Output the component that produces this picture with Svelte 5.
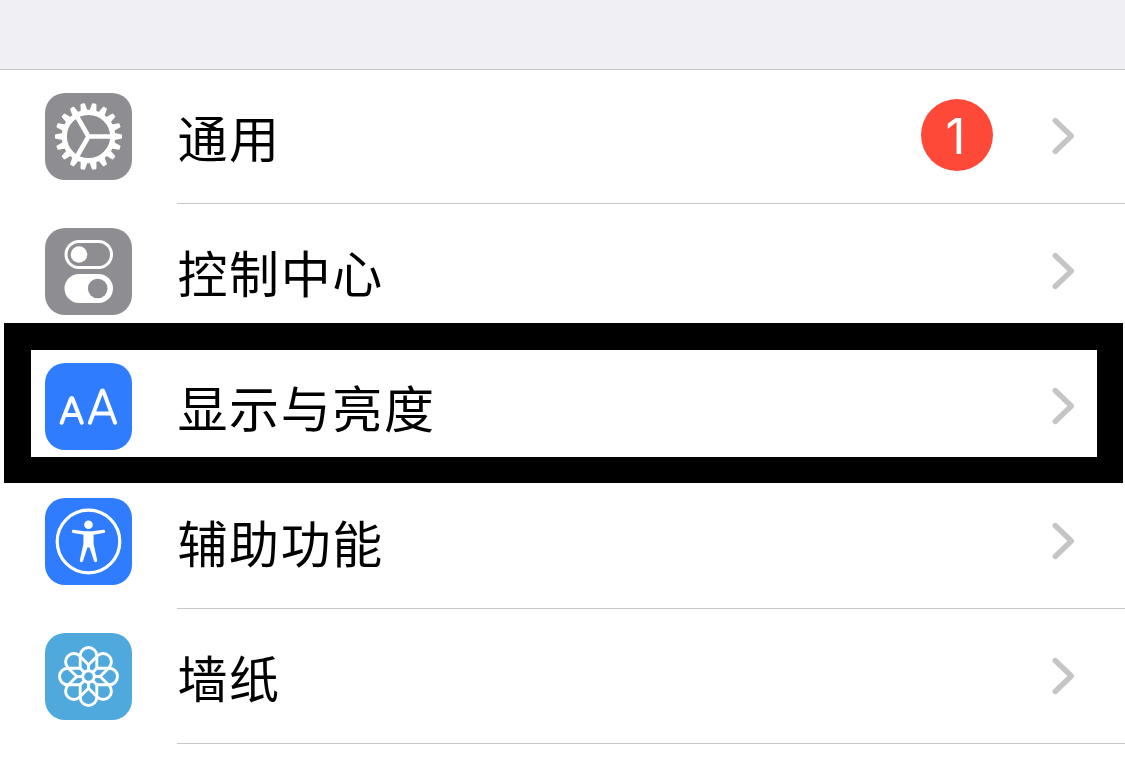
<script lang="ts">
	const rows = [
		{ icon: 'general', label: '通用', color: '#8e8e92', badge: 1 },
		{ icon: 'control', label: '控制中心', color: '#8e8e92' },
		{ icon: 'display', label: '显示与亮度', color: '#2f7cff' },
		{ icon: 'accessibility', label: '辅助功能', color: '#2f7cff' },
		{ icon: 'wallpaper', label: '墙纸', color: '#50a9dd' }
	];

	const teeth = Array.from({ length: 18 }, (_, i) => i * 20);
	const petals = Array.from({ length: 8 }, (_, i) => i * 45);
</script>

<header></header>
<ul>
	{#each rows as row}
		<li class:highlighted={row.icon === 'display'}>
			<svg class="icon" viewBox="0 0 87 87" style:background={row.color}>
				{#if row.icon === 'general'}
					<g fill="none" stroke="#fff">
						<circle cx="43.5" cy="43.5" r="24.2" stroke-width="5.2" />
						<path d="M43.5 43.5H67M43.5 43.5L31.7 23M43.5 43.5L31.7 64" stroke-width="4.6" />
					</g>
					{#each teeth as angle}
						<path
							d="M39.8 19L41.2 10.8Q41.4 10 42.2 10H44.8Q45.6 10 45.8 10.8L47.2 19Z"
							fill="#fff"
							transform="rotate({angle + 10} 43.5 43.5)"
						/>
					{/each}
				{:else if row.icon === 'control'}
					<rect x="21" y="13.5" width="45.5" height="26" rx="13" fill="none" stroke="#fff" stroke-width="3" />
					<circle cx="34" cy="26.5" r="8.3" fill="#fff" />
					<rect x="19.5" y="46" width="48.5" height="29" rx="14.5" fill="#fff" />
					<circle cx="52.7" cy="60.5" r="9.8" fill={row.color} />
				{:else if row.icon === 'display'}
					<g fill="none" stroke="#fff" stroke-width="4" stroke-linecap="round" stroke-linejoin="round">
						<path d="M16.6 59.8L25.8 36Q26.7 34 27.6 36L36.8 59.8M20 52H33.4" />
						<path d="M44.9 59.8L56.5 28.6Q57.5 26.4 58.5 28.6L70.1 59.8M49 50.4H66" />
					</g>
				{:else if row.icon === 'accessibility'}
					<circle cx="43.5" cy="43.5" r="31.3" fill="none" stroke="#fff" stroke-width="3.2" />
					<circle cx="43.5" cy="26.8" r="4.3" fill="#fff" />
					<path
						d="M28.5 33.4L39 35H48L58.5 33.4" fill="none" stroke="#fff" stroke-width="3.4" stroke-linecap="round"
					/>
					<path
						d="M38.5 34H48.5L48.6 46L52.2 62.3Q52 64.2 50.6 64.2Q49.4 64.2 48.9 62.8L44.6 49.5H42.4L38.1 62.8Q37.6 64.2 36.4 64.2Q35 64.2 34.8 62.3L38.4 46Z"
						fill="#fff"
					/>
				{:else}
					<g fill="none" stroke="#fff" stroke-width="2.9">
						{#each petals as angle}
							<path
								d="M43.5 38V31.7M35.2 35.2V22.8A8.3 8.3 0 0 1 51.8 22.8V35.2"
								transform="rotate({angle} 43.5 43.5)"
							/>
						{/each}
						<circle cx="43.5" cy="43.5" r="5.8" />
					</g>
				{/if}
			</svg>
			<div class="content">
				<span class="label">{row.label}</span>
				{#if row.badge}
					<span class="badge">{row.badge}</span>
				{/if}
				<svg class="chevron" viewBox="0 0 24 40">
					<path d="M3.7 4.5L19.8 20L3.7 35.5" />
				</svg>
			</div>
		</li>
	{/each}
</ul>

<style>
	:global(body) {
		background: #fff;
		overflow: hidden;
	}
	header {
		box-sizing: border-box;
		height: 70px;
		background: #efeff4;
		border-bottom: 1px solid #c6c6c9;
	}
	ul {
		list-style: none;
		margin: -1px 0 0;
		padding: 0;
		font-family: 'Noto Sans CJK SC', sans-serif;
	}
	li {
		position: relative;
		display: flex;
		align-items: center;
		gap: 45px;
		height: 135px;
		padding-left: 45px;
	}
	.icon {
		flex: none;
		width: 87px;
		height: 87px;
		border-radius: 20px;
	}
	.content {
		box-sizing: border-box;
		flex: 1;
		display: flex;
		align-items: center;
		height: 135px;
		padding-right: 49px;
		border-bottom: 1px solid #c6c6c9;
	}
	/* these separators run behind the marker frame */
	.highlighted .content,
	li:nth-child(2) .content {
		border-color: transparent;
	}
	.label {
		flex: 1;
		font-size: 50px;
		line-height: 70px;
		letter-spacing: 1.6px;
		text-indent: 0.5px;
		color: #000;
	}
	.badge {
		box-sizing: border-box;
		width: 72px;
		height: 72px;
		margin: 0 58px 2px 0;
		padding-right: 3px;
		border-radius: 50%;
		background: #fe4939;
		color: #fff;
		font-family: Inter, sans-serif;
		font-size: 49px;
		line-height: 75px;
		text-align: center;
	}
	.chevron {
		width: 25px;
		height: 40px;
	}
	.chevron path {
		fill: none;
		stroke: #c5c5c7;
		stroke-width: 5.4;
		stroke-linecap: round;
		stroke-linejoin: round;
	}
	/* thick marker frame drawn over the row and its neighbours */
	.highlighted::after {
		content: '';
		position: absolute;
		z-index: 1;
		inset: -16px 2px -9px 4px;
		border: 26px solid #000;
		border-width: 27px 26px 26px 27px;
	}
</style>
